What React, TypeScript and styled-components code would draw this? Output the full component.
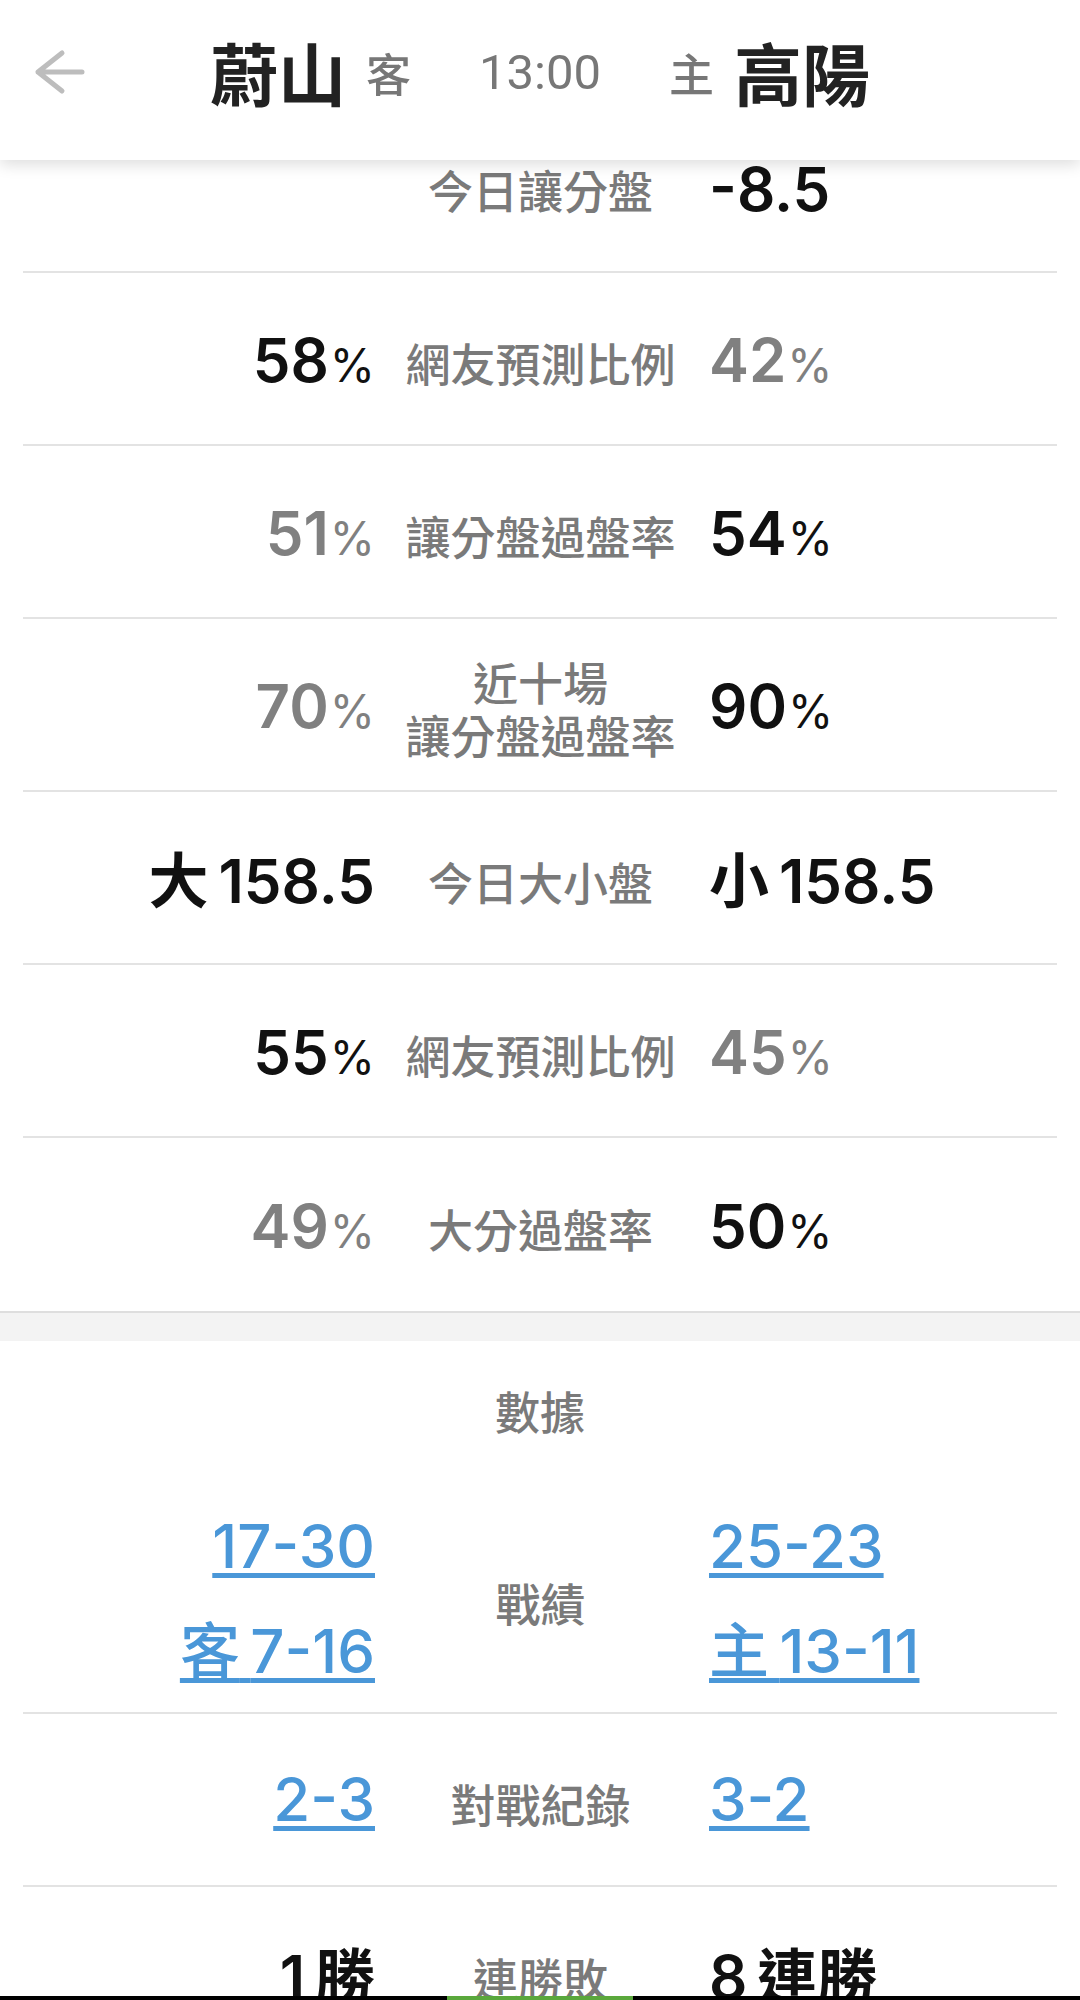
import React from 'react';
import styled, { createGlobalStyle } from 'styled-components';

const GlobalStyle = createGlobalStyle`
  html, body { margin: 0; padding: 0; background: #ffffff; }
  body {
    font-family: "Noto Sans CJK TC", "Noto Sans", sans-serif;
    -webkit-font-smoothing: antialiased;
  }
  * { box-sizing: border-box; }
`;

const Header = styled.header`
  position: fixed;
  top: 0;
  left: 0;
  right: 0;
  height: 160px;
  background: #ffffff;
  box-shadow: 0 5px 14px rgba(0, 0, 0, 0.13);
  display: grid;
  grid-template-columns: 1fr auto 1fr;
  align-items: center;
  padding-bottom: 6px;
  z-index: 10;
`;

const BackButton = styled.button`
  justify-self: start;
  margin-left: 34px;
  width: 52px;
  height: 56px;
  padding: 0;
  border: 0;
  background: none;
  display: flex;
  align-items: center;
  justify-content: center;
  cursor: pointer;
`;

const TitleBar = styled.div`
  display: flex;
  align-items: center;
  gap: 68px;
  margin-bottom: 10px;
`;

const TeamGroup = styled.div`
  display: flex;
  align-items: center;
  gap: 20px;
`;

const TeamName = styled.span`
  font-size: 68px;
  line-height: 1;
  font-weight: 700;
  color: #222222;
`;

const SideTag = styled.span`
  font-size: 45px;
  line-height: 1;
  font-weight: 500;
  color: #777777;
`;

const GameTime = styled.span`
  font-family: Roboto, "Liberation Sans", sans-serif;
  font-size: 49px;
  line-height: 1;
  color: #777777;
`;

const Main = styled.main`
  padding-top: 100px;
`;

const Table = styled.section`
  padding: 0 23px;
`;

const Row = styled.div<{ $height?: number; $pad?: number }>`
  display: grid;
  grid-template-columns: 349px 337px 1fr;
  align-items: center;
  height: ${(p) => p.$height ?? 173}px;
  padding-top: ${(p) => p.$pad ?? 7}px;
  border-bottom: 2px solid #e3e3e3;

  &:last-child {
    border-bottom: 0;
  }
`;

const Cell = styled.div<{ $align: 'left' | 'center' | 'right' }>`
  text-align: ${(p) => p.$align};
  display: flex;
  flex-direction: column;
  align-items: ${(p) =>
    p.$align === 'left' ? 'flex-start' : p.$align === 'right' ? 'flex-end' : 'center'};
  margin-right: ${(p) => (p.$align === 'right' ? '-3px' : '0')};
`;

const Value = styled.span<{ $tone: 'dark' | 'muted' }>`
  font-family: Inter, "Noto Sans CJK TC", sans-serif;
  font-size: 60px;
  line-height: 70px;
  font-weight: 600;
  color: ${(p) => (p.$tone === 'dark' ? '#111111' : '#808080')};
  white-space: nowrap;
`;

const Pct = styled.span`
  font-size: 46px;
  font-weight: 400;
  margin-left: 1px;
`;

const Label = styled.span`
  font-size: 45px;
  line-height: 53px;
  font-weight: 500;
  color: #7a7a7a;
  text-align: center;
`;

const Band = styled.div`
  height: 30px;
  background: #f3f3f3;
  border-top: 2px solid #dedede;
`;

const SectionTitle = styled.h2`
  margin: 0;
  height: 149px;
  padding-top: 47px;
  font-size: 45px;
  line-height: 45px;
  font-weight: 500;
  color: #7a7a7a;
  text-align: center;
`;

const LinkStack = styled.div<{ $align: 'left' | 'right' }>`
  display: flex;
  flex-direction: column;
  align-items: ${(p) => (p.$align === 'left' ? 'flex-start' : 'flex-end')};
  gap: 27px;
`;

const RecordLink = styled.a`
  display: inline-block;
  padding-bottom: 8px;
  font-family: Inter, "Noto Sans CJK TC", sans-serif;
  font-size: 60px;
  line-height: 70px;
  font-weight: 500;
  color: #4a97d8;
  text-decoration: underline;
  text-decoration-thickness: 5px;
  text-underline-offset: 5px;
  text-decoration-skip-ink: none;
  white-space: nowrap;
  cursor: pointer;
`;

const BottomEdge = styled.div`
  position: fixed;
  left: 0;
  right: 0;
  bottom: 0;
  height: 4px;
  background: #000000;
  display: flex;
  justify-content: center;
  z-index: 10;
`;

const Indicator = styled.div`
  width: 186px;
  height: 100%;
  background: #5aa83c;
`;

type Tone = 'dark' | 'muted';

interface OddsRow {
  left?: { text: string; tone: Tone; pct?: boolean };
  label: string[];
  right: { text: string; tone: Tone; pct?: boolean };
}

const oddsRows: OddsRow[] = [
  { label: ['今日讓分盤'], right: { text: '-8.5', tone: 'dark' } },
  { left: { text: '58', tone: 'dark', pct: true }, label: ['網友預測比例'], right: { text: '42', tone: 'muted', pct: true } },
  { left: { text: '51', tone: 'muted', pct: true }, label: ['讓分盤過盤率'], right: { text: '54', tone: 'dark', pct: true } },
  { left: { text: '70', tone: 'muted', pct: true }, label: ['近十場', '讓分盤過盤率'], right: { text: '90', tone: 'dark', pct: true } },
  { left: { text: '大\u2009158.5', tone: 'dark' }, label: ['今日大小盤'], right: { text: '小\u2009158.5', tone: 'dark' } },
  { left: { text: '55', tone: 'dark', pct: true }, label: ['網友預測比例'], right: { text: '45', tone: 'muted', pct: true } },
  { left: { text: '49', tone: 'muted', pct: true }, label: ['大分過盤率'], right: { text: '50', tone: 'dark', pct: true } },
];

const ValueText: React.FC<{ v?: { text: string; tone: Tone; pct?: boolean } }> = ({ v }) =>
  v ? (
    <Value $tone={v.tone}>
      {v.text}
      {v.pct && <Pct>%</Pct>}
    </Value>
  ) : null;

const BackArrow = () => (
  <svg width="52" height="56" viewBox="0 0 52 56" fill="none">
    <path
      d="M28 4 L4 23 L28 42 M4 23 H48"
      stroke="#bdbdbd"
      strokeWidth="5"
      strokeLinecap="round"
      strokeLinejoin="round"
    />
  </svg>
);

export default function App() {
  return (
    <>
      <GlobalStyle />
      <Header>
        <BackButton aria-label="返回">
          <BackArrow />
        </BackButton>
        <TitleBar>
          <TeamGroup>
            <TeamName>蔚山</TeamName>
            <SideTag>客</SideTag>
          </TeamGroup>
          <GameTime>13:00</GameTime>
          <TeamGroup>
            <SideTag>主</SideTag>
            <TeamName>高陽</TeamName>
          </TeamGroup>
        </TitleBar>
        <div />
      </Header>

      <Main>
        <Table>
          {oddsRows.map((r, i) => (
            <Row key={i}>
              <Cell $align="right">
                <ValueText v={r.left} />
              </Cell>
              <Cell $align="center">
                {r.label.map((l) => (
                  <Label key={l}>{l}</Label>
                ))}
              </Cell>
              <Cell $align="left">
                <ValueText v={r.right} />
              </Cell>
            </Row>
          ))}
        </Table>

        <Band />

        <SectionTitle>數據</SectionTitle>
        <Table>
          <Row $height={224} $pad={2}>
            <Cell $align="right">
              <LinkStack $align="right">
                <RecordLink>17-30</RecordLink>
                <RecordLink>客{'\u2009'}7-16</RecordLink>
              </LinkStack>
            </Cell>
            <Cell $align="center">
              <Label>戰績</Label>
            </Cell>
            <Cell $align="left">
              <LinkStack $align="left">
                <RecordLink>25-23</RecordLink>
                <RecordLink>主{'\u2009'}13-11</RecordLink>
              </LinkStack>
            </Cell>
          </Row>
          <Row>
            <Cell $align="right">
              <RecordLink>2-3</RecordLink>
            </Cell>
            <Cell $align="center">
              <Label>對戰紀錄</Label>
            </Cell>
            <Cell $align="left">
              <RecordLink>3-2</RecordLink>
            </Cell>
          </Row>
          <Row>
            <Cell $align="right">
              <Value $tone="dark">1{'\u2009'}勝</Value>
            </Cell>
            <Cell $align="center">
              <Label>連勝敗</Label>
            </Cell>
            <Cell $align="left">
              <Value $tone="dark">8{'\u2009'}連勝</Value>
            </Cell>
          </Row>
        </Table>
      </Main>

      <BottomEdge>
        <Indicator />
      </BottomEdge>
    </>
  );
}
